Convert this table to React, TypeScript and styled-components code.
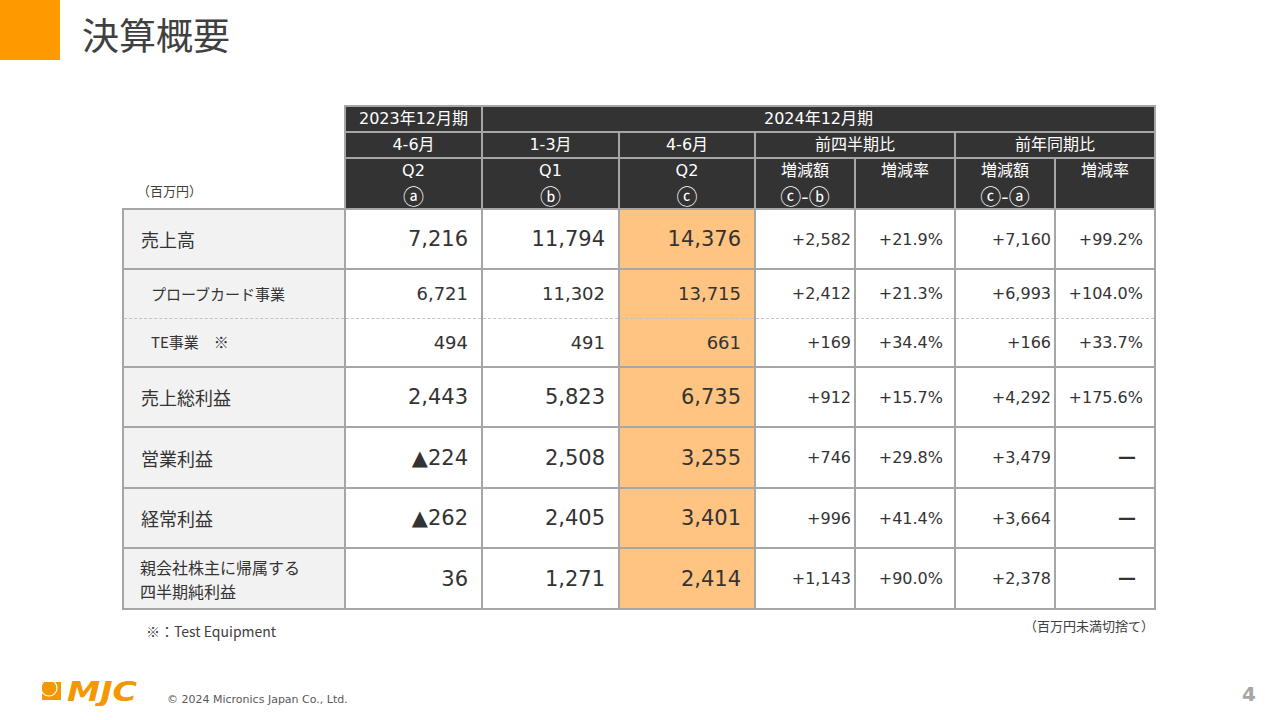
import React from "react";
import styled, { createGlobalStyle } from "styled-components";

const GlobalStyle = createGlobalStyle`
  html, body { margin: 0; padding: 0; background: #fff; }
  body {
    font-family: "DejaVu Sans", "Noto Sans CJK JP", sans-serif;
    color: #333;
  }
`;

type Row = {
  label: string[];
  kind: "main" | "sub";
  height: number;
  values: string[];
  dash?: "top" | "bottom";
};

const rows: Row[] = [
  { label: ["売上高"], kind: "main", height: 60, values: ["7,216", "11,794", "14,376", "+2,582", "+21.9%", "+7,160", "+99.2%"] },
  { label: ["プローブカード事業"], kind: "sub", height: 49, dash: "bottom", values: ["6,721", "11,302", "13,715", "+2,412", "+21.3%", "+6,993", "+104.0%"] },
  { label: ["TE事業　※"], kind: "sub", height: 49, dash: "top", values: ["494", "491", "661", "+169", "+34.4%", "+166", "+33.7%"] },
  { label: ["売上総利益"], kind: "main", height: 60, values: ["2,443", "5,823", "6,735", "+912", "+15.7%", "+4,292", "+175.6%"] },
  { label: ["営業利益"], kind: "main", height: 61, values: ["▲224", "2,508", "3,255", "+746", "+29.8%", "+3,479", "ー"] },
  { label: ["経常利益"], kind: "main", height: 60, values: ["▲262", "2,405", "3,401", "+996", "+41.4%", "+3,664", "ー"] },
  { label: ["親会社株主に帰属する", "四半期純利益"], kind: "main", height: 61, values: ["36", "1,271", "2,414", "+1,143", "+90.0%", "+2,378", "ー"] },
];

const colWidths = [222, 137, 137, 136, 100, 100, 100, 100];

const App = () => {
  return (
    <>
      <GlobalStyle />
      <Slide>
        <Header>
          <OrangeBlock />
          <Title>決算概要</Title>
        </Header>

        <Main>
          <Table>
            <colgroup>
              {colWidths.map((w, i) => (
                <col key={i} style={{ width: w }} />
              ))}
            </colgroup>
            <thead>
              <tr>
                <UnitCell rowSpan={3}>（百万円）</UnitCell>
                <HeadCell $h={25}>2023年12月期</HeadCell>
                <HeadCell $h={25} colSpan={6}>2024年12月期</HeadCell>
              </tr>
              <tr>
                <HeadCell $h={25}>4-6月</HeadCell>
                <HeadCell $h={25}>1-3月</HeadCell>
                <HeadCell $h={25}>4-6月</HeadCell>
                <HeadCell $h={25} colSpan={2}>前四半期比</HeadCell>
                <HeadCell $h={25} colSpan={2}>前年同期比</HeadCell>
              </tr>
              <tr>
                <HeadCell $h={51}>Q2<br /><Circ>ⓐ</Circ></HeadCell>
                <HeadCell $h={51}>Q1<br /><Circ>ⓑ</Circ></HeadCell>
                <HeadCell $h={51}>Q2<br /><Circ>ⓒ</Circ></HeadCell>
                <HeadCell $h={51}>増減額<br /><Circ>ⓒ-ⓑ</Circ></HeadCell>
                <HeadCell $h={51}>増減率</HeadCell>
                <HeadCell $h={51}>増減額<br /><Circ>ⓒ-ⓐ</Circ></HeadCell>
                <HeadCell $h={51}>増減率</HeadCell>
              </tr>
            </thead>
            <tbody>
              {rows.map((row) => (
                <BodyRow key={row.label.join("")} $h={row.height}>
                  <LabelCell
                    $dash={row.dash}
                    $size={row.kind === "sub" ? 15 : row.label.length > 1 ? 16 : 18}
                    $indent={row.kind === "sub" ? 27 : row.label.length > 1 ? 16 : 17}
                  >
                    {row.label.map((l, i) => (
                      <LabelLine key={i}>{l}</LabelLine>
                    ))}
                  </LabelCell>
                  {row.values.map((v, i) => (
                    <NumCell
                      key={i}
                      $dash={row.dash}
                      $hl={i === 2}
                      $size={i < 3 ? (row.kind === "sub" ? 18 : 21) : 16}
                      $pad={i < 3 ? 13 : i % 2 === 1 ? 3 : 11}
                    >
                      {v === "ー" ? <Dash>ー</Dash> : v}
                    </NumCell>
                  ))}
                </BodyRow>
              ))}
            </tbody>
          </Table>

          <Notes>
            <Note $top={12} $size={14} $indent={24}>※：Test Equipment</Note>
            <Note $top={7} $size={13} $indent={0}>（百万円未満切捨て）</Note>
          </Notes>
        </Main>

        <Footer>
          <Logo width="104" height="30" viewBox="0 0 104 30">
            <defs>
              <clipPath id="mark">
                <rect x="0" y="6" width="19" height="18" />
              </clipPath>
            </defs>
            <rect x="0" y="6" width="19" height="18" fill="#F39800" />
            <g clipPath="url(#mark)">
              <circle cx="7" cy="12" r="8" fill="none" stroke="#fff" strokeWidth="1.2" />
            </g>
            <text
              x="25"
              y="25"
              fontFamily="DejaVu Sans, sans-serif"
              fontWeight="bold"
              fontStyle="italic"
              fontSize="26"
              fill="#F39800"
              textLength="70"
              lengthAdjust="spacingAndGlyphs"
            >
              MJC
            </text>
          </Logo>
          <Copyright>© 2024 Micronics Japan Co., Ltd.</Copyright>
          <PageNum>4</PageNum>
        </Footer>
      </Slide>
    </>
  );
};

const Slide = styled.div`
  width: 1280px;
  height: 720px;
  display: flex;
  flex-direction: column;
  background: #fff;
  overflow: hidden;
`;

const Header = styled.div`
  display: flex;
  align-items: center;
  height: 60px;
  gap: 22px;
`;

const OrangeBlock = styled.div`
  width: 60px;
  height: 60px;
  background: #ff9900;
  flex-shrink: 0;
`;

const Title = styled.h1`
  margin: 0;
  font-family: "Noto Sans CJK JP", sans-serif;
  font-weight: 400;
  font-size: 37px;
  color: #404040;
  line-height: 1;
  padding-top: 8px;
`;

const Main = styled.div`
  padding: 45px 0 0 122px;
`;

const Table = styled.table`
  border-collapse: collapse;
  table-layout: fixed;
  width: 1032px;
`;

const UnitCell = styled.th`
  border: none;
  padding: 0 0 8px 14px;
  text-align: left;
  vertical-align: bottom;
  font-family: "Noto Sans CJK JP", sans-serif;
  font-weight: 400;
  font-size: 13px;
  color: #404040;
`;

const HeadCell = styled.th<{ $h: number }>`
  height: ${(p) => p.$h}px;
  box-sizing: border-box;
  padding: 0;
  background: #333;
  color: #fff;
  border: 2px solid #a6a6a6;
  font-weight: 400;
  font-size: 16px;
  line-height: 24px;
  text-align: center;
  vertical-align: top;
  white-space: nowrap;
`;

const Circ = styled.span`
  display: inline-block;
  height: 24px;
  font-family: "Noto Sans CJK JP", sans-serif;
  font-size: 21px;
  line-height: 24px;
  vertical-align: top;
`;

const BodyRow = styled.tr<{ $h: number }>`
  height: ${(p) => p.$h}px;
`;

const dashBorder = (d?: "top" | "bottom") =>
  d ? `border-${d}: 1px dashed #c4c4c4;` : "";

const LabelCell = styled.td<{ $size: number; $indent: number; $dash?: "top" | "bottom" }>`
  background: #f2f2f2;
  border: 2px solid #a6a6a6;
  ${(p) => dashBorder(p.$dash)}
  padding: 0 0 0 ${(p) => p.$indent}px;
  font-family: "Noto Sans CJK JP", sans-serif;
  font-size: ${(p) => p.$size}px;
  line-height: 24px;
  color: #333;
  vertical-align: middle;
`;

const LabelLine = styled.div`
  white-space: nowrap;
`;

const NumCell = styled.td<{ $size: number; $pad: number; $hl: boolean; $dash?: "top" | "bottom" }>`
  background: ${(p) => (p.$hl ? "#ffc482" : "#fff")};
  border: 2px solid #a6a6a6;
  ${(p) => dashBorder(p.$dash)}
  padding: 0 ${(p) => p.$pad}px 0 0;
  font-size: ${(p) => p.$size}px;
  color: #333;
  text-align: right;
  vertical-align: middle;
  white-space: nowrap;
`;

const Dash = styled.span`
  font-family: "Noto Sans CJK JP", sans-serif;
  font-size: 20px;
  font-weight: 500;
  margin-right: 6px;
`;

const Notes = styled.div`
  width: 1032px;
  display: flex;
  justify-content: space-between;
  align-items: flex-start;
`;

const Note = styled.div<{ $top: number; $size: number; $indent: number }>`
  padding: ${(p) => p.$top}px 0 0 ${(p) => p.$indent}px;
  font-family: "Noto Sans CJK JP", sans-serif;
  font-size: ${(p) => p.$size}px;
  color: #404040;
  line-height: 18px;
`;

const Footer = styled.div`
  margin-top: auto;
  height: 50px;
  display: flex;
  align-items: center;
  padding: 0 24px 0 42px;
`;

const Logo = styled.svg`
  display: block;
  margin-top: -8px;
`;

const Copyright = styled.div`
  margin-left: 21px;
  padding-top: 8px;
  font-family: "DejaVu Sans", sans-serif;
  font-size: 11px;
  color: #595959;
`;

const PageNum = styled.div`
  margin-left: auto;
  font-family: "DejaVu Sans", sans-serif;
  font-weight: 700;
  font-size: 20px;
  color: #a6a6a6;
  padding-bottom: 2px;
`;

export default App;
